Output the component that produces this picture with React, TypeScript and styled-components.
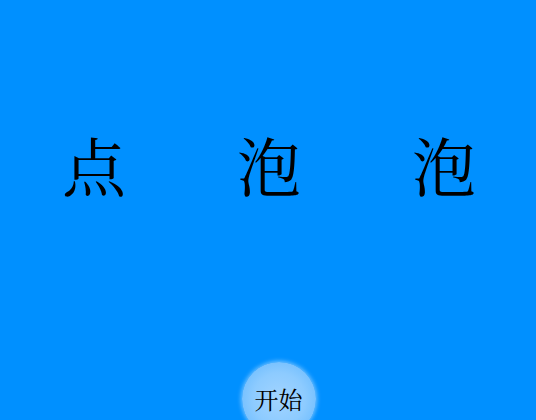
import React from "react";
import styled, { createGlobalStyle } from "styled-components";

const Global = createGlobalStyle`
  html, body { margin: 0; padding: 0; }
  body { background: #0090ff; overflow: hidden; }
`;

const Page = styled.div`
  width: 536px;
  height: 420px;
  background: #0090ff;
  display: flex;
  flex-direction: column;
  align-items: center;
  overflow: hidden;
`;

const Title = styled.div`
  margin-top: 124px;
  margin-left: 2px;
  display: flex;
  justify-content: center;
  gap: 111px;
  font-family: "Noto Serif CJK SC", serif;
  font-size: 64px;
  line-height: 78px;
  color: #000;
`;

const Char = styled.span`
  display: block;
`;

const StartButton = styled.button`
  margin-top: 160px;
  margin-left: 21px;
  width: 74px;
  height: 74px;
  flex: none;
  border: none;
  border-radius: 50%;
  padding: 0;
  background: radial-gradient(circle at 50% 50%, #a2d4ff 0%, #8dcbff 50%, #72bfff 78%, #a4d6ff 100%);
  box-shadow: 0 0 4px 1px rgba(200, 230, 255, 0.6);
  font-family: "Noto Serif CJK SC", serif;
  font-size: 24px;
  line-height: 1;
  color: #000;
  cursor: pointer;
`;

export default function App() {
  return (
    <Page>
      <Global />
      <Title>
        <Char>点</Char>
        <Char>泡</Char>
        <Char>泡</Char>
      </Title>
      <StartButton>开始</StartButton>
    </Page>
  );
}
